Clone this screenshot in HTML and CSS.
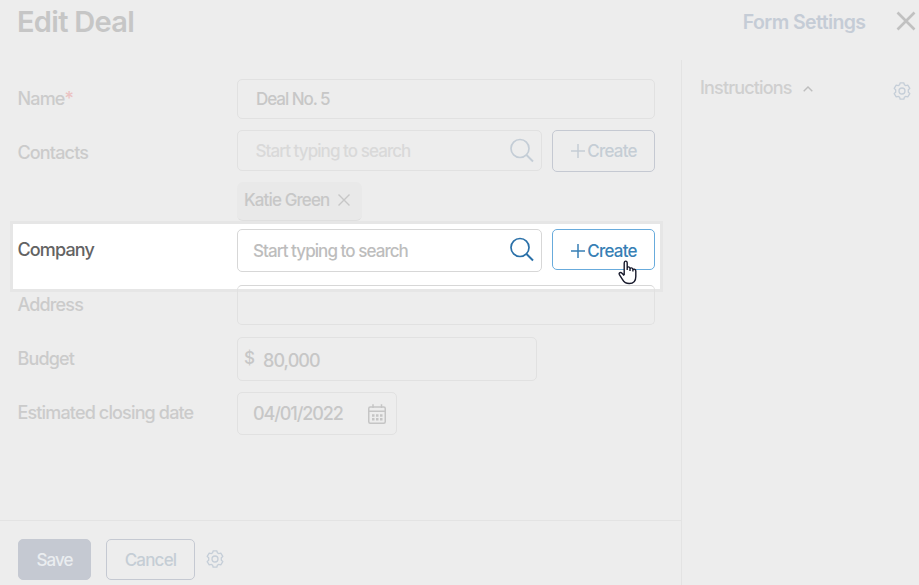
FILE: index.html
```html
<!DOCTYPE html>
<html lang="en">
<head>
<meta charset="utf-8">
<title>Edit Deal</title>
<link rel="stylesheet" href="styles.css">
</head>
<body>
<svg class="symbols" aria-hidden="true">
  <symbol id="search" viewBox="0 0 26 26"><circle cx="11" cy="10.500" r="9"/><path d="M17.500 17l6.500 6.500" stroke-width="2"/></symbol>
  <symbol id="gear" viewBox="0 0 18 18"><path d="M7.100.8h3.800l.4 1.900 1.500.9 2-.5 2 3.300-1.500 1.300v2.600l1.500 1.300-2 3.300-2-.5-1.500.9-.4 1.900H7.100l-.4-1.900-1.500-.9-2 .5-2-3.300 1.500-1.300V7.700L1.200 6.400l2-3.300 2 .5 1.500-.9z"/><circle cx="9" cy="9" r="3"/></symbol>
</svg>
<div class="page">
  <header class="header">
    <h1 class="title">Edit Deal</h1>
    <a class="form-settings">Form Settings</a>
    <svg class="close" viewBox="0 0 20 20"><path d="M1.500 1.500l17 17M18.500 1.500l-17 17"/></svg>
  </header>
  <div class="body">
    <main class="main">
      <form class="form">
        <div class="row name-row">
          <label class="label"><span>Name</span><span class="required">*</span></label>
          <div class="field name-field"><span>Deal No. 5</span></div>
        </div>
        <div class="row contacts-row">
          <label class="label contacts-label"><span>Contacts</span></label>
          <div class="field search-field"><span>Start typing to search</span><svg class="search"><use href="#search"/></svg></div>
          <div class="button create"><svg class="plus" viewBox="0 0 14 14"><path d="M7 0v14M0 7h14"/></svg><span>Create</span></div>
        </div>
        <div class="chip"><span>Katie Green</span><svg class="chip-x" viewBox="0 0 12 12"><path d="M.5.5l11 11M11.500.5l-11 11"/></svg></div>
        <div class="row company-row">
          <label class="label"><span>Company</span></label>
          <div class="field search-field"><span>Start typing to search</span><svg class="search"><use href="#search"/></svg></div>
          <div class="button create"><svg class="plus" viewBox="0 0 14 14"><path d="M7 0v14M0 7h14"/></svg><span>Create</span></div>
          <svg class="cursor" viewBox="0 0 20 25"><path d="M6.200 15V3.200C6.200.4 9.200.4 9.200 3.200V10 8.400C9.200 6.300 12 6.400 12 8.600V11 9.200C12 7.400 14.900 7.400 14.900 9.600V11.500 10.300C14.900 8.600 17.800 8.800 17.800 11V16.500C17.800 21 15.500 23.500 11.300 23.500 7.500 23.500 5.900 22 4.400 19.300L1.400 14.600C.5 12.700 2.700 11.800 4 13.200L6.200 15.500"/></svg>
        </div>
        <div class="row address-row">
          <label class="label"><span>Address</span></label>
          <div class="field address-field"></div>
        </div>
        <div class="row budget-row">
          <label class="label"><span>Budget</span></label>
          <div class="field budget-field"><span class="currency">$</span><span class="amount">80,000</span></div>
        </div>
        <div class="row date-row">
          <label class="label date-label"><span>Estimated closing date</span></label>
          <div class="field date-field"><span>04/01/2022</span>
            <svg class="calendar" viewBox="0 0 18 20"><rect x=".75" y="3" width="16.500" height="16.200" rx="1.500"/><path d="M.75 7.200h16.500M5 .2V4M13.500.2V4"/><path class="days" d="M4 11.500h10.500M4 15.200h10.500"/></svg>
          </div>
        </div>
      </form>
      <footer class="footer">
        <div class="button save"><span>Save</span></div>
        <div class="button cancel"><span>Cancel</span></div>
        <svg class="gear"><use href="#gear"/></svg>
      </footer>
    </main>
    <aside class="aside">
      <span>Instructions</span>
      <svg class="chevron" viewBox="0 0 10 6"><path d="M.7 5.300L5 1l4.300 4.300"/></svg>
      <svg class="gear"><use href="#gear"/></svg>
    </aside>
  </div>
</div>
</body>
</html>
```
FILE: styles.css
```css
*, *::before { box-sizing: border-box; }
body { margin: 0; background: #ededed; font-family: Inter, sans-serif; font-size: 18px; font-weight: 450; line-height: 22px; color: #c7c7c7; }
svg { fill: none; stroke: currentColor; flex: none; }
span, a, h1 { white-space: nowrap; }
.symbols { position: absolute; width: 0; height: 0; }
.page { display: flex; flex-direction: column; width: 919px; height: 585px; overflow: hidden; }

.header { display: flex; height: 60px; padding: 0 3.500px 0 17px; align-items: flex-start; color: #c5ccd6; }
.title { margin: 4px 0 0; font-size: 29px; line-height: 36px; font-weight: 600; color: #c6c6c6; letter-spacing: -0.7px; }
.form-settings { margin: 11px 0 0 auto; font-size: 19.500px; font-weight: 600; letter-spacing: -0.6px; }
.close { width: 20px; height: 20px; margin: 11px 0 0 30px; color: #c1c1c1; stroke-width: 2.600; }

.body { display: flex; flex: 1; }
.main { display: flex; flex-direction: column; width: 681px; }
.form { flex: 1; padding: 19px 26px 0 18px; }
.row { display: flex; position: relative; align-items: center; width: 637px; }
.label { width: 219.500px; margin-left: -0.500px; color: #cbcbcb; letter-spacing: -0.85px; }
.required { color: #ebc3c3; }
.field { display: flex; align-items: center; border: 1px solid #e1e1e1; border-radius: 5px; letter-spacing: -0.93px; }
.name-row { height: 40px; margin-bottom: 11px; }
.name-field { width: 418px; height: 40px; padding-left: 18px; font-size: 17px; letter-spacing: -1.050px; }
.contacts-row { height: 41px; margin-bottom: 11px; }
.contacts-label { padding-top: 5px; }
.search-field { width: 305px; height: 41px; margin-right: 10px; padding: 0 6px 0 17.500px; justify-content: space-between; color: #d9d9d9; font-size: 17px; }
.search { width: 26px; height: 26px; color: #c4cdd6; stroke-width: 1.700; }
.button { display: flex; align-items: center; justify-content: center; height: 41px; border: 1px solid #c5c9d2; border-radius: 5px; color: #c5cdd5; font-size: 17px; letter-spacing: -0.8px; }
.create { width: 103px; height: 42px; padding: 1px 0 0 1px; gap: 2px; }
.plus { width: 14px; height: 14px; stroke-width: 1.500; }
.chip { display: flex; align-items: center; width: 125px; height: 39px; margin: 0 0 8px 219px; padding: 0 0 2px 7px; border-radius: 6px; background: #e9e9e9; border-bottom: 1px solid #dfdfdf; font-size: 17px; letter-spacing: -0.88px; }
.chip-x { width: 12px; height: 12px; margin-left: 9px; stroke-width: 1.400; }

.company-row { height: 43px; margin-bottom: 13px; align-items: flex-start; }
.company-row::before { content: ""; position: absolute; left: -8px; top: -8px; width: 653px; height: 71px; border: 3px solid #e6e6e6; background: #fff; }
.company-row > * { position: relative; }
.company-row .label { margin-top: 10px; color: #636363; }
.company-row .search-field { height: 43px; padding-left: 15px; border-color: #d7d7d7; color: #bdbdbd; }
.company-row .search { color: #2a70a8; margin-top: -2px; }
.company-row .create { height: 41px; padding-top: 2px; border-color: #68abdc; color: #377fb5; }
.company-row .cursor { position: absolute; left: 600px; top: 31px; width: 20px; height: 25px; color: #17192b; fill: #fff; stroke-width: 1.400; }

.address-row { height: 40px; margin-bottom: 12px; }
.address-field { width: 418px; height: 40px; border-top-color: #d7d7d7; }
.budget-row { height: 44px; margin-bottom: 11px; }
.budget-field { width: 300px; height: 44px; padding-left: 6px; letter-spacing: -0.95px; }
.currency { font-size: 17px; margin-right: 9px; padding-bottom: 3px; }
.amount { padding-top: 3px; }
.date-row { height: 43px; }
.date-label { padding-bottom: 1px; }
.date-field { width: 160px; height: 43px; padding: 0 10px 0 15px; justify-content: space-between; letter-spacing: -1.100px; }
.calendar { width: 18px; height: 20px; color: #c5c5c5; stroke-width: 1.500; }
.days { stroke-width: 2.400; stroke-dasharray: 2.500 1.500; }

.footer { display: flex; height: 65px; padding: 18px 0 0 18px; border-top: 1px solid #e3e3e3; }
.save { width: 73px; margin-right: 15px; background: #c5c9d2; color: #eaedf0; font-weight: 500; letter-spacing: -0.9px; }
.cancel { width: 89px; margin-right: 11px; }
.gear { width: 18px; height: 18px; color: #c5ced8; stroke-width: 1.300; stroke-linejoin: round; }
.footer .gear { margin-top: 11px; }

.aside { display: flex; flex: 1; padding: 17px 8.500px 0 18px; border-left: 1px solid #e3e3e3; color: #cfcfcf; letter-spacing: -0.85px; }
.chevron { width: 10px; height: 6px; margin: 9px 0 0 11px; color: #bebebe; stroke-width: 1.400; }
.aside .gear { margin: 5px 0 0 auto; }
```
